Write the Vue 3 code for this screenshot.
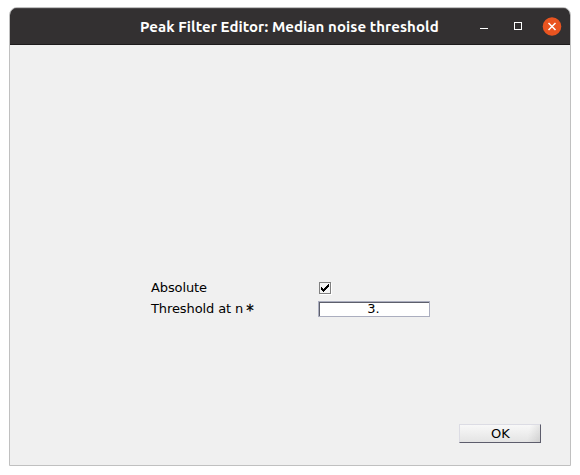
<script setup>
import { ref } from 'vue'

const title = 'Peak Filter Editor: Median noise threshold'
const absolute = ref(true)
const threshold = ref('3.')
</script>

<template>
  <main class="desktop">
    <section class="window">
      <header class="titlebar">
        <h1 class="title">{{ title }}</h1>
        <div class="controls">
          <button class="control" aria-label="Minimize">
            <svg width="10" height="10" viewBox="0 0 10 10"><path d="M1 6.5H9" stroke="#fff" /></svg>
          </button>
          <button class="control" aria-label="Maximize">
            <svg width="10" height="10" viewBox="0 0 10 10"><rect x="1.5" y="0.5" width="7" height="7" fill="none" stroke="#fff" /></svg>
          </button>
          <button class="control close" aria-label="Close">
            <svg width="20" height="20" viewBox="0 0 20 20">
              <circle cx="10" cy="9.5" r="9.3" fill="#e95420" />
              <path d="M6.5 6L13.5 13M13.5 6L6.5 13" stroke="#fff" stroke-width="1.5" />
            </svg>
          </button>
        </div>
      </header>
      <form class="body" @submit.prevent>
        <div class="fields">
          <label class="label" for="absolute">Absolute</label>
          <button id="absolute" type="button" class="checkbox" role="checkbox" :aria-checked="absolute" @click="absolute = !absolute">
            <svg v-if="absolute" width="10" height="10" viewBox="0 0 10 10" shape-rendering="crispEdges">
              <path d="M8 1h1v3h-1v1h-1v1h-1v1h-1v1h-1v1h-1v-1h-1v-1h-1v-3h1v1h1v1h1v-1h1v-1h1v-1h1v-1h1z" fill="#000" />
            </svg>
          </button>
          <label class="label" for="threshold">Threshold at n <span class="factor">*</span></label>
          <input id="threshold" v-model="threshold" class="entry" />
        </div>
        <button class="ok">OK</button>
      </form>
    </section>
  </main>
</template>

<style>
body {
  background: #fff;
}
</style>

<style scoped>
* {
  box-sizing: border-box;
}

.desktop {
  height: 475px;
  padding: 7px 9px 9px;
  overflow: hidden;
}

.window {
  width: 562px;
  height: 459px;
  display: flex;
  flex-direction: column;
  border: 1px solid #c0c0c0;
  border-radius: 8px 8px 0 0;
  background: #f0f0f0;
  overflow: hidden;
}

.titlebar {
  flex: none;
  height: 37px;
  display: flex;
  align-items: center;
  padding: 0 8px 0 130px;
  background: #333031;
  border-top: 1px solid #494647;
  border-bottom: 1px solid #1d1b1c;
}

.title {
  flex: 1;
  margin: 0;
  color: #fff;
  font: bold 15px/20px Ubuntu, "Noto Sans", sans-serif;
  letter-spacing: 0.07px;
  white-space: nowrap;
}

.controls {
  display: flex;
  align-items: center;
  gap: 14px;
}

.control {
  width: 20px;
  height: 20px;
  display: flex;
  align-items: center;
  justify-content: center;
  padding: 0;
  border: 0;
  background: none;
}

.body {
  flex: 1;
  display: flex;
  flex-direction: column;
  justify-content: space-between;
  padding: 232px 29px 22px 141px;
  font: 13px/21px "DejaVu Sans", sans-serif;
  letter-spacing: -0.1px;
  color: #000;
}

.fields {
  display: grid;
  grid-template-columns: 167px 112px;
  grid-auto-rows: 21px;
  align-items: center;
}

.label {
  white-space: nowrap;
}

.factor {
  display: inline-block;
  font-size: 15px;
  line-height: 15px;
  margin-left: -1px;
  vertical-align: -3px;
  -webkit-text-stroke: 0.3px #000;
}

.checkbox {
  width: 12px;
  height: 12px;
  margin-left: 1px;
  padding: 0;
  display: flex;
  align-items: center;
  justify-content: center;
  border: 1px solid #808080;
  background: #f4f4f4;
  box-shadow: 1px 1px 0 #fff;
}

.entry {
  width: 112px;
  height: 16px;
  padding: 0 1px 0 0;
  border: 1px solid #abaebf;
  box-shadow: inset 1px 1px 0 #5d5f6c;
  outline: 0;
  background: #fff;
  font: inherit;
  line-height: 14px;
  text-align: center;
  color: #000;
}

.ok {
  align-self: flex-end;
  width: 82px;
  height: 19px;
  padding: 0 0 0 1px;
  border: 1px solid;
  border-color: #dcdce4 #5d5d6c #5d5d6c #dcdce4;
  background:
    linear-gradient(100deg, transparent 84%, rgba(0, 0, 0, 0.09) 100%),
    linear-gradient(#f8f8f8, #e4e4e4);
  font: inherit;
  line-height: 17px;
  color: #000;
}
</style>
